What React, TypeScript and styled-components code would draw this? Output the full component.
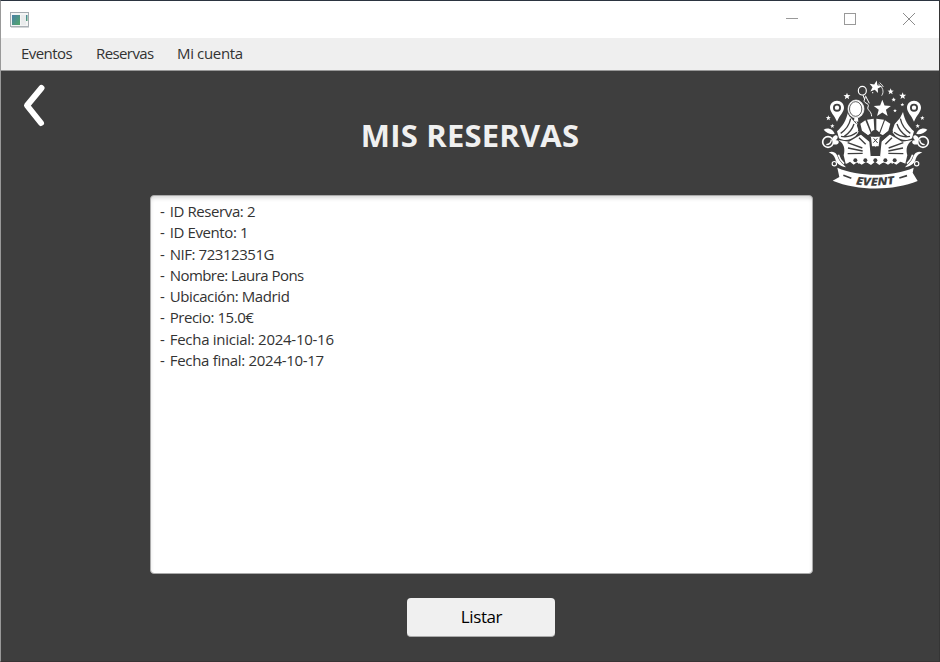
import React from "react";
import styled, { createGlobalStyle } from "styled-components";

const GlobalStyle = createGlobalStyle`
  * { box-sizing: border-box; }
  html, body { margin: 0; padding: 0; background: #3e3e3e; overflow: hidden; }
`;

const Window = styled.div`
  width: 940px;
  height: 662px;
  display: flex;
  flex-direction: column;
  background: #3e3e3e;
  border-top: 1px solid #2b3440;
  border-left: 1px solid #999;
  border-right: 1px solid #353535;
  border-bottom: 1px solid #383435;
  font-family: "Open Sans", "Noto Sans", sans-serif;
`;

const TitleBar = styled.header`
  height: 37px;
  flex: none;
  display: flex;
  align-items: center;
  justify-content: space-between;
  background: #fff;
  padding: 0 1px 0 9px;
`;

const WindowControls = styled.div`
  display: flex;
  height: 100%;
`;

const ControlButton = styled.button`
  width: 58.5px;
  height: 36px;
  padding: 0;
  border: 0;
  background: transparent;
  display: flex;
  align-items: center;
  justify-content: center;
`;

const MenuBar = styled.nav`
  height: 33px;
  flex: none;
  display: flex;
  align-items: center;
  gap: 24px;
  padding: 0 0 2px 20px;
  background: #efefef;
  border-bottom: 1px solid #999;
`;

const MenuItem = styled.span<{ $spacing: number; $width: number }>`
  width: ${(p) => p.$width}px;
  white-space: nowrap;
  font-size: 15px;
  line-height: 20px;
  letter-spacing: ${(p) => p.$spacing}px;
  color: #333;
`;

const Content = styled.main`
  flex: 1;
  display: flex;
  flex-direction: column;
`;

const Hero = styled.section`
  height: 124px;
  display: grid;
  grid-template-columns: 125px 1fr 124px;
`;

const BackButton = styled.button`
  width: 30px;
  height: 50px;
  margin: 9px 0 0 19px;
  padding: 0;
  border: 0;
  background: transparent;
`;

const Title = styled.h1`
  margin: 43px 0 0;
  text-align: center;
  font-size: 31px;
  line-height: 42px;
  font-weight: 700;
  letter-spacing: 0.2px;
  text-indent: -1px;
  color: #f0f0f0;
`;

const LogoSlot = styled.div`
  padding: 3px 0 0 0;
`;

const Listing = styled.div`
  width: 663px;
  height: 379px;
  margin-left: 148.5px;
  padding: 5px 9.5px;
  background: #fff;
  border: 1px solid #aaa;
  border-radius: 4px;
  box-shadow: inset 0 3px 4px -1px rgba(0, 0, 0, 0.16);
`;

const ListingLine = styled.div<{ $spacing: number }>`
  display: flex;
  height: 21.28px;
  line-height: 21.28px;
  font-size: 15px;
  letter-spacing: ${(p) => p.$spacing}px;
  white-space: pre;
  color: #333;
`;

const Dash = styled.span`
  width: 9.7px;
  flex: none;
`;

const ListButton = styled.button`
  width: 148px;
  height: 39px;
  margin: 24px 0 0 406px;
  padding: 0 0 1px 1px;
  border: 0;
  border-bottom: 1px solid #aaa;
  border-radius: 4px;
  background: #f0f0f0;
  color: #000;
  font-family: inherit;
  font-size: 17px;
  letter-spacing: -0.4px;
`;

const Svg = styled.svg`
  display: block;
`;

const menu = [
  { label: "Eventos", spacing: -0.55, width: 51 },
  { label: "Reservas", spacing: -0.6, width: 57 },
  { label: "Mi cuenta", spacing: -0.35, width: 70 },
];

const reservation = [
  { text: "ID Reserva: 2", spacing: -0.4 },
  { text: "ID Evento: 1", spacing: -0.4 },
  { text: "NIF: 72312351G", spacing: -0.45 },
  { text: "Nombre: Laura Pons", spacing: -0.55 },
  { text: "Ubicación: Madrid", spacing: -0.4 },
  { text: "Precio: 15.0€", spacing: -0.46 },
  { text: "Fecha inicial: 2024-10-16", spacing: -0.27 },
  { text: "Fecha final: 2024-10-17", spacing: -0.3 },
];

function starPoints(cx: number, cy: number, r: number, turn = 0) {
  return Array.from({ length: 10 }, (_, i) => {
    const a = ((i * 36 - 90 + turn) * Math.PI) / 180;
    const d = i % 2 ? r * 0.42 : r;
    return `${(cx + d * Math.cos(a)).toFixed(1)},${(cy + d * Math.sin(a)).toFixed(1)}`;
  }).join(" ");
}

const stars: [number, number, number, number][] = [
  [202, 104, 27, 0],
  [181, 39, 20, 12],
  [96, 67, 11, 0],
  [227, 53, 10, 0],
  [263, 66, 11, 0],
  [236, 77, 7, 0],
  [262, 92, 6, 0],
  [240, 110, 6, 0],
  [40, 132, 8, 0],
  [52, 156, 7, 0],
  [322, 132, 7, 0],
  [308, 156, 7, 0],
];

function AppIcon() {
  return (
    <Svg width="20" height="16" viewBox="0 0 20 16">
      <defs>
        <linearGradient id="pane" x1="0" y1="0" x2="1" y2="1">
          <stop offset="0" stopColor="#4a7fa8" />
          <stop offset="1" stopColor="#52a868" />
        </linearGradient>
      </defs>
      <rect x="0.5" y="0.5" width="18" height="14" fill="#f4f5f5" stroke="#a4abb0" />
      <path d="M1 15.3h18" stroke="#c9cccf" />
      <rect x="2" y="3" width="8" height="10" fill="url(#pane)" />
      <rect x="11" y="3" width="5" height="10" fill="#e9ebec" />
      <rect x="16" y="3" width="1.5" height="6" fill="url(#pane)" />
    </Svg>
  );
}

/* One side of the emblem: map pin, curtain, rays, ribbon loops. */
function EmblemSide() {
  return (
    <g>
      <path
        fillRule="evenodd"
        fill="#fff"
        d="M66 80c-12 0-21 9-21 21 0 13 13 22 21 42 8-20 21-29 21-42 0-12-9-21-21-21zm0 9a12 12 0 1 1 0 24 12 12 0 0 1 0-24z"
      />
      <circle cx="66" cy="101" r="6.5" fill="#fff" />
      <path d="M99 114C94 139 83 157 66 172L72 193C88 202 106 199 121 187L132 173L124 150L108 132Z" fill="#fff" />
      <path d="M107 134C103 153 92 168 77 178M117 150C112 166 103 177 88 187M78 187C98 191 113 185 126 175" fill="none" stroke="#3e3e3e" strokeWidth="4" />
      <path d="M70 198C88 209 91 226 86 244L92 269L106 261Q113 251 120 260L132 270Q142 250 151 263L168 269L166 205L140 181L122 191L102 203Z" fill="#fff" />
      <path d="M98 206L142 222M99 222L143 231M98 239L143 238M132 191L152 211" stroke="#3e3e3e" strokeWidth="4" />
      <circle cx="39" cy="204" r="16" fill="none" stroke="#fff" strokeWidth="5" />
      <path d="M34 212Q48 211 49 197" fill="none" stroke="#fff" strokeWidth="4" />
      <path d="M53 190C65 175 75 189 62 199C75 195 76 215 55 211Z" fill="#fff" />
      <path d="M26 167C39 159 55 166 59 180C46 182 33 176 26 167Z" fill="#fff" />
      <path d="M41 235C60 228 67 243 70 253C76 267 88 273 93 280C73 276 62 265 61 255C58 245 51 239 41 235Z" fill="#fff" />
      <path d="M70 242Q75 259 87 269" fill="none" stroke="#fff" strokeWidth="5" />
      <circle cx="58" cy="269" r="6.5" fill="none" stroke="#fff" strokeWidth="3.5" />
    </g>
  );
}

function EventLogo() {
  return (
    <Svg width="120" height="120" viewBox="0 0 360 360">
      <EmblemSide />
      <g transform="translate(363 0) scale(-1 1)">
        <EmblemSide />
      </g>

      <path d="M136 149L151 139L167 178L159 184L141 170ZM156 137L176 134L178 169L170 174ZM184 134L207 137L193 175L184 169ZM210 139L226 149L220 170L204 184L195 179Z" fill="#fff" />
      <path d="M164 188H198L196 250H166Z" fill="#fff" />
      <path d="M130 166L168 190L171 217L191 217L194 190L231 166L234 173L200 202L195 246H167L163 203L128 174Z" fill="#3e3e3e" />
      <path d="M171 190H192L181 220Z" fill="#fff" />
      <path d="M176 193L188 207M187 193L175 206" stroke="#3e3e3e" strokeWidth="3" />
      <circle cx="180" cy="178" r="10" fill="#3e3e3e" />
      <path d="M94 248H268V267L256 263L244 272L231 264L219 272L205 264L193 273L180 263L168 273L153 264L140 272L127 264L116 272L105 263L94 270Z" fill="#fff" />
      {[121, 151, 181, 211, 239].map((x) => (
        <circle key={x} cx={x} cy="259" r="6" fill="#3e3e3e" />
      ))}

      <path d="M121 139L126 148L121 164L130 173M125 151L116 172L127 168" fill="none" stroke="#fff" strokeWidth="3" />
      <ellipse cx="123" cy="105" rx="28" ry="31" fill="#3e3e3e" />
      <ellipse cx="123" cy="105" rx="24" ry="27" fill="#fff" stroke="#fff" strokeWidth="2" />
      <ellipse cx="122" cy="105" rx="18.5" ry="22" fill="none" stroke="#3e3e3e" strokeWidth="2.5" />
      <path d="M118 132L129 132L130 143L117 141Z" fill="#fff" />
      <ellipse cx="142" cy="50" rx="12" ry="13" fill="none" stroke="#fff" strokeWidth="3.5" />
      <path d="M144 63L148 74L152 68M150 73C139 91 166 84 159 99C155 109 169 109 170 127" fill="none" stroke="#fff" strokeWidth="3" />
      <path d="M151 65L163 88" stroke="#fff" strokeWidth="3" />
      <path d="M190 30C204 40 208 53 200 65M194 26C200 31 203 35 205 39" fill="none" stroke="#fff" strokeWidth="2.5" />
      <circle cx="173" cy="56" r="2" fill="#fff" />
      {stars.map(([x, y, r, t]) => (
        <polygon key={`${x}-${y}`} points={starPoints(x, y, r, t)} fill="#fff" />
      ))}

      <path d="M67 281C130 309 232 309 296 281L293 296L308 321C235 351 128 351 53 320L73 309Z" fill="#fff" />
      <path d="M85 304L109 313M253 312L276 305" stroke="#3e3e3e" strokeWidth="5" />
      <path id="ribbon" d="M121 331Q181 340 247 328" fill="none" />
      <text fill="#3e3e3e" fontFamily="Open Sans, sans-serif" fontSize="33" fontWeight="800" fontStyle="italic">
        <textPath href="#ribbon" textLength="118" lengthAdjust="spacingAndGlyphs" startOffset="1">EVENT</textPath>
      </text>
    </Svg>
  );
}

export default function App() {
  return (
    <>
      <GlobalStyle />
      <Window>
        <TitleBar>
          <AppIcon />
          <WindowControls>
            <ControlButton aria-label="Minimizar">
              <Svg width="12" height="12"><path d="M0 5.5h12" stroke="#999" /></Svg>
            </ControlButton>
            <ControlButton aria-label="Maximizar">
              <Svg width="12" height="12"><rect x="0.5" y="0.5" width="11" height="11" fill="none" stroke="#999" /></Svg>
            </ControlButton>
            <ControlButton aria-label="Cerrar">
              <Svg width="12" height="12"><path d="M0 0L12 12M12 0L0 12" stroke="#8c8c8c" /></Svg>
            </ControlButton>
          </WindowControls>
        </TitleBar>
        <MenuBar>
          {menu.map((m) => (
            <MenuItem key={m.label} $spacing={m.spacing} $width={m.width}>{m.label}</MenuItem>
          ))}
        </MenuBar>
        <Content>
          <Hero>
            <BackButton aria-label="Volver">
              <Svg width="30" height="50" viewBox="0 0 30 50">
                <path d="M21.5 8L7 25.5L21 43" fill="none" stroke="#fff" strokeWidth="6" strokeLinecap="round" strokeLinejoin="round" />
              </Svg>
            </BackButton>
            <Title>MIS RESERVAS</Title>
            <LogoSlot><EventLogo /></LogoSlot>
          </Hero>
          <Listing>
            {reservation.map((r) => (
              <ListingLine key={r.text} $spacing={r.spacing}>
                <Dash>-</Dash>
                {r.text}
              </ListingLine>
            ))}
          </Listing>
          <ListButton>Listar</ListButton>
        </Content>
      </Window>
    </>
  );
}
